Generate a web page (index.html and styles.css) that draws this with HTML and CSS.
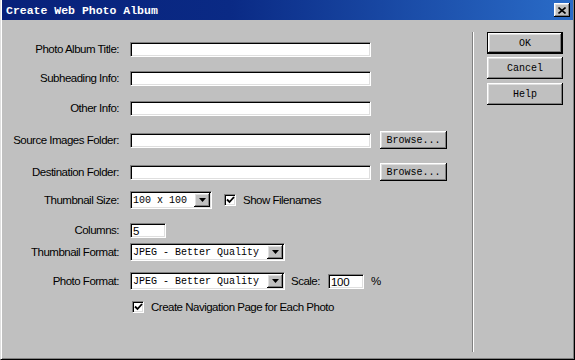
FILE: index.html
```html
<!doctype html>
<html lang="en">
<head>
	<meta charset="UTF-8">
	<title>Create Web Photo Album</title>

	<link rel="stylesheet" href="styles.css">
</head>
<body>
	<div class="window">
		<div class="titlebar">
			<span class="title">Create Web Photo Album</span>
			<span class="close">
				<svg width="8" height="7" viewBox="0 0 8 7"><path d="M0.5 0.5 L7.5 6.5 M7.5 0.5 L0.5 6.5" stroke="#000" stroke-width="1.6" fill="none"/></svg>
			</span>
		</div>

		<div class="content">
			<div class="form">
				<div class="row r1">
					<span class="lbl">Photo Album Title:</span>
					<span class="field wide"></span>
				</div>
				<div class="row r2">
					<span class="lbl">Subheading Info:</span>
					<span class="field wide"></span>
				</div>
				<div class="row r3">
					<span class="lbl">Other Info:</span>
					<span class="field wide"></span>
				</div>
				<div class="row r4">
					<span class="lbl">Source Images Folder:</span>
					<span class="field wide"></span>
					<span class="btn browse">Browse...</span>
				</div>
				<div class="row r5">
					<span class="lbl">Destination Folder:</span>
					<span class="field wide"></span>
					<span class="btn browse">Browse...</span>
				</div>
				<div class="row r6">
					<span class="lbl">Thumbnail Size:</span>
					<span class="select size">
						<span class="value">100 x 100</span>
						<span class="arrow"><svg width="7" height="4" viewBox="0 0 7 4"><polygon points="0,0 7,0 3.5,4" fill="#000"/></svg></span>
					</span>
					<span class="check show-names">
						<svg width="9" height="8" viewBox="0 0 9 8"><path d="M1 3.5 L3.5 6 L8 1" stroke="#000" stroke-width="1.8" fill="none"/></svg>
					</span>
					<span class="txt">Show Filenames</span>
				</div>
				<div class="row r7">
					<span class="lbl">Columns:</span>
					<span class="field small">5</span>
				</div>
				<div class="row r8">
					<span class="lbl">Thumbnail Format:</span>
					<span class="select format">
						<span class="value">JPEG - Better Quality</span>
						<span class="arrow"><svg width="7" height="4" viewBox="0 0 7 4"><polygon points="0,0 7,0 3.5,4" fill="#000"/></svg></span>
					</span>
				</div>
				<div class="row r9">
					<span class="lbl">Photo Format:</span>
					<span class="select format">
						<span class="value">JPEG - Better Quality</span>
						<span class="arrow"><svg width="7" height="4" viewBox="0 0 7 4"><polygon points="0,0 7,0 3.5,4" fill="#000"/></svg></span>
					</span>
					<span class="txt scale">Scale:</span>
					<span class="field small">100</span>
					<span class="txt percent">%</span>
				</div>
				<div class="row r10">
					<span class="lbl"></span>
					<span class="check nav-page">
						<svg width="9" height="8" viewBox="0 0 9 8"><path d="M1 3.5 L3.5 6 L8 1" stroke="#000" stroke-width="1.8" fill="none"/></svg>
					</span>
					<span class="txt">Create Navigation Page for Each Photo</span>
				</div>
			</div>

			<div class="sep"></div>

			<div class="side">
				<span class="btn action default">OK</span>
				<span class="btn action">Cancel</span>
				<span class="btn action">Help</span>
			</div>
		</div>
	</div>
</body>
</html>
```

FILE: styles.css
```css
html {
	box-sizing: border-box;
}

*, *:before, *:after {
	box-sizing: inherit;
}

body {
	margin: 0;
	font-family: "Liberation Sans", Arial, sans-serif;
	font-size: 11.5px;
	color: #000;
}

.window {
	width: 575px;
	height: 360px;
	background: #c0c0c0;
	border-left: 1px solid #dfdfdf;
	border-right: 1px solid #000;
	border-bottom: 1px solid #000;
	box-shadow: inset 1px 0 #fff, inset -1px -1px #808080;
	display: flex;
	flex-direction: column;
}

.titlebar {
	height: 20px;
	margin: 0 1px;
	padding: 0 3px 0 4px;
	background: linear-gradient(to right, #08217a 0%, #0a2a85 40%, #2a6cc8 100%);
	display: flex;
	align-items: center;
	justify-content: space-between;
}

.title {
	font-family: "Liberation Mono", monospace;
	font-weight: bold;
	font-size: 11.5px;
	color: #fff;
}

.close {
	width: 16px;
	height: 14px;
	background: #c0c0c0;
	box-shadow: inset -1px -1px #000, inset 1px 1px #fff, inset -2px -2px #808080, inset 2px 2px #dfdfdf;
	display: flex;
	align-items: center;
	justify-content: center;
}

.content {
	display: flex;
	flex: 1;
}

.form {
	width: 471px;
	padding-top: 19px;
}

.row {
	display: flex;
	align-items: center;
	height: 20px;
}

.r2 { margin-top: 9px; }
.r3 { margin-top: 10px; }
.r4 { margin-top: 12px; }
.r5 { margin-top: 12px; }
.r6 { margin-top: 8px; }
.r7 { margin-top: 10px; }
.r8 { margin-top: 2px; }
.r9 { margin-top: 9px; }
.r10 { margin-top: 6px; }

.lbl {
	width: 118px;
	margin-right: 11px;
	flex-shrink: 0;
	text-align: right;
	letter-spacing: -0.5px;
}

.txt {
	letter-spacing: -0.5px;
}

.field {
	height: 15px;
	background: #fff;
	border: 1px solid;
	border-color: #808080 #fff #fff #808080;
	box-shadow: inset 1px 1px #000, inset -1px -1px #dfdfdf;
	padding: 1px 0 0 2px;
	line-height: 13px;
	letter-spacing: -0.3px;
}

.wide {
	width: 241px;
}

.small {
	width: 36px;
}

.btn {
	display: flex;
	align-items: center;
	justify-content: center;
	background: #c0c0c0;
	font-family: "Liberation Mono", monospace;
	font-size: 10px;
	box-shadow: inset -1px -1px #000, inset 1px 1px #fff, inset -2px -2px #808080, inset 2px 2px #dfdfdf;
}

.browse {
	width: 67px;
	height: 18px;
	margin-left: 9px;
}

.select {
	display: flex;
	align-items: center;
	justify-content: space-between;
	height: 18px;
	background: #fff;
	border: 1px solid;
	border-color: #808080 #fff #fff #808080;
	box-shadow: inset 1px 1px #000, inset -1px -1px #dfdfdf;
	padding: 1px 1px 1px 2px;
	font-family: "Liberation Mono", monospace;
	font-size: 10px;
}

.size {
	width: 82px;
}

.format {
	width: 155px;
}

.arrow {
	width: 16px;
	height: 14px;
	background: #c0c0c0;
	box-shadow: inset -1px -1px #000, inset 1px 1px #fff, inset -2px -2px #808080, inset 2px 2px #dfdfdf;
	display: flex;
	align-items: center;
	justify-content: center;
}

.check {
	width: 12px;
	height: 12px;
	background: #fff;
	border: 1px solid;
	border-color: #808080 #fff #fff #808080;
	box-shadow: inset 1px 1px #000, inset -1px -1px #dfdfdf;
	display: flex;
	align-items: center;
	justify-content: center;
	margin-right: 7px;
}

.show-names {
	margin-left: 12px;
}

.nav-page {
	margin-left: 2px;
}

.scale {
	margin: 0 8px 0 6px;
}

.percent {
	margin-left: 7px;
}

.sep {
	width: 2px;
	height: 320px;
	margin-top: 12px;
	border-left: 1px solid #808080;
	border-right: 1px solid #fff;
}

.side {
	display: flex;
	flex-direction: column;
	padding: 12px 0 0 13px;
}

.action {
	width: 76px;
	height: 22px;
	margin-top: 3px;
}

.action:last-child {
	margin-top: 4px;
}

.default {
	margin-top: 0;
	border: 1px solid #000;
}
```
